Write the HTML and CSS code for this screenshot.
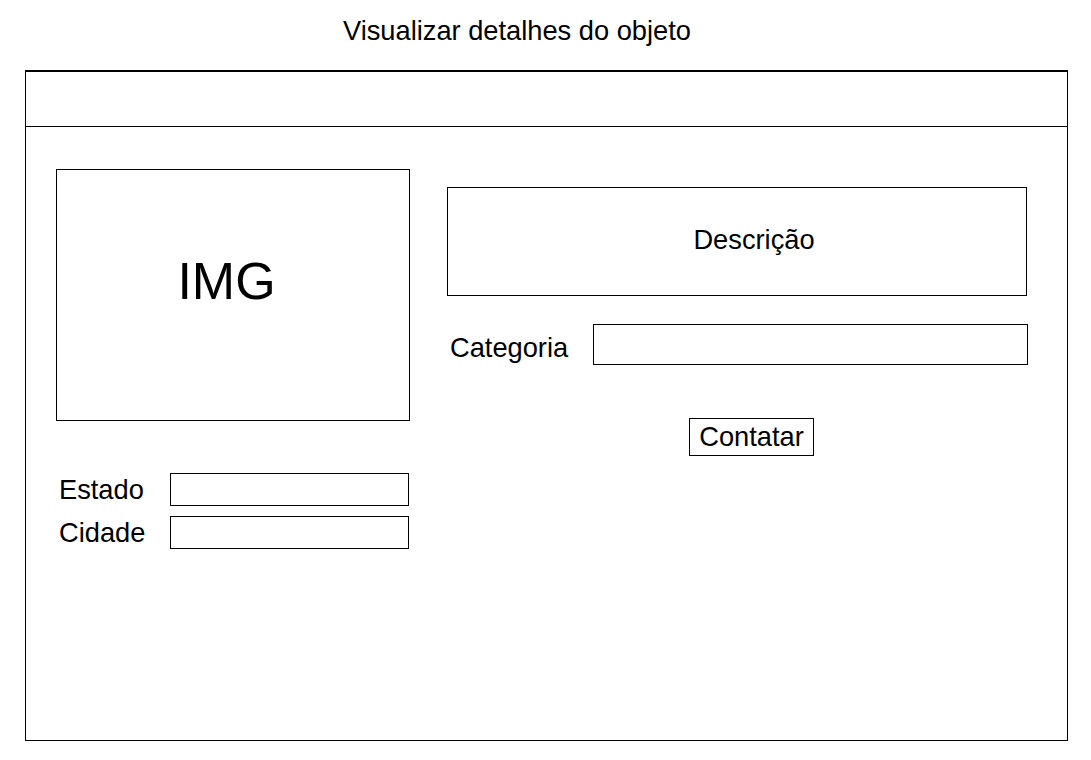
FILE: index.html
```html
<!DOCTYPE html>
<html lang="pt">
<head>
<meta charset="utf-8">
<title>Visualizar detalhes do objeto</title>
<link rel="stylesheet" href="styles.css">
</head>
<body>
<div class="title">Visualizar detalhes do objeto</div>
<div class="frame">
  <div class="header"></div>
  <div class="content">
    <div class="left">
      <div class="img-box"><span class="img-text">IMG</span></div>
      <div class="loc">
        <div class="loc-row"><span class="label">Estado</span><div class="field loc-field"></div></div>
        <div class="loc-row"><span class="label">Cidade</span><div class="field loc-field"></div></div>
      </div>
    </div>
    <div class="right">
      <div class="desc">Descrição</div>
      <div class="cat-row"><span class="label">Categoria</span><div class="field cat-field"></div></div>
      <div class="btn">Contatar</div>
    </div>
  </div>
</div>
</body>
</html>
```

FILE: styles.css
```css
* { box-sizing: border-box; }
html, body { margin: 0; padding: 0; background: #fff; }
body {
  font-family: "Liberation Sans", Arial, sans-serif;
  color: #000;
  font-size: 27.25px;
  line-height: 31px;
  width: 1091px;
  height: 760px;
  overflow: hidden;
}
.title {
  padding-top: 15px;
  padding-left: 343px;
  height: 70px;
  white-space: nowrap;
}
.frame {
  margin-left: 25px;
  width: 1043px;
  height: 671px;
  border: 1px solid #000;
  border-top-width: 2px;
}
.header {
  height: 55px;
  border-bottom: 1px solid #000;
}
.content {
  display: flex;
  padding-left: 30px;
}
.left {
  width: 354px;
  padding-top: 42px;
}
.img-box {
  width: 354px;
  height: 252px;
  border: 1px solid #000;
  display: flex;
  justify-content: center;
  align-items: flex-start;
  padding-top: 81px;
  padding-right: 13px;
}
.img-text {
  font-size: 52px;
  line-height: 60px;
}
.loc {
  margin-top: 52px;
  display: flex;
  flex-direction: column;
  gap: 10px;
}
.loc-row {
  display: flex;
  align-items: center;
  height: 33px;
}
.label {
  white-space: nowrap;
}
.loc-row .label {
  width: 114px;
  padding-left: 3px;
  padding-bottom: 1px;
}
.field {
  border: 1px solid #000;
}
.loc-field {
  width: 239px;
  height: 33px;
}
.right {
  margin-left: 37px;
  padding-top: 60px;
  width: 581px;
}
.desc {
  width: 580px;
  height: 109px;
  border: 1px solid #000;
  display: flex;
  align-items: center;
  justify-content: center;
  padding-left: 34px;
  padding-bottom: 4px;
}
.cat-row {
  margin-top: 28px;
  display: flex;
  align-items: center;
  height: 41px;
}
.cat-row .label {
  width: 146px;
  padding-left: 3px;
  padding-top: 6px;
}
.cat-field {
  width: 435px;
  height: 41px;
}
.btn {
  margin-top: 53px;
  margin-left: 242px;
  width: 125px;
  height: 38px;
  border: 1px solid #000;
  display: flex;
  align-items: center;
  justify-content: center;
  padding-bottom: 2px;
}
```
